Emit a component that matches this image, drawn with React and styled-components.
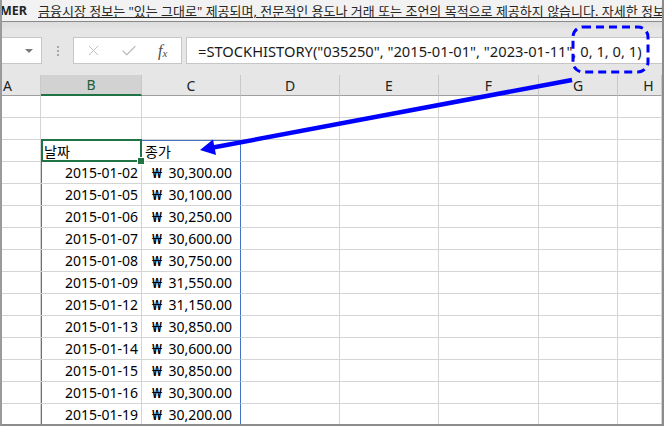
import React from "react";
import styled, { createGlobalStyle } from "styled-components";
import { X, Check } from "lucide-react";

const GlobalStyle = createGlobalStyle`
  html, body {
    margin: 0;
    padding: 0;
    background: #fff;
  }
`;

const COLS = ["A", "B", "C", "D", "E", "F", "G", "H"];

const rows = [
  ["2015-01-02", "30,300.00"],
  ["2015-01-05", "30,100.00"],
  ["2015-01-06", "30,250.00"],
  ["2015-01-07", "30,600.00"],
  ["2015-01-08", "30,750.00"],
  ["2015-01-09", "31,550.00"],
  ["2015-01-12", "31,150.00"],
  ["2015-01-13", "30,850.00"],
  ["2015-01-14", "30,600.00"],
  ["2015-01-15", "30,850.00"],
  ["2015-01-16", "30,300.00"],
  ["2015-01-19", "30,200.00"],
];

const FORMULA = '=STOCKHISTORY("035250", "2015-01-01", "2023-01-11", 0, 1, 0, 1)';

const App = () => {
  // 15 rows: two blank, header, then data
  const sheetRows = [null, null, "head", ...rows];

  return (
    <Window>
      <GlobalStyle />
      <MessageBar>
        <strong>MER</strong>
        <Notice>
          금융시장 정보는 "있는 그대로" 제공되며, 전문적인 용도나 거래 또는 조언의 목적으로
          제공하지 않습니다. 자세한 정보
        </Notice>
      </MessageBar>
      <Shade />

      <FormulaBar>
        <NameBox>
          <Caret />
        </NameBox>
        <Grip>
          <i />
          <i />
          <i />
        </Grip>
        <IconBox>
          <X size={17} strokeWidth={1.4} color="#bdbdbd" />
          <Check size={18} strokeWidth={1.6} color="#bdbdbd" />
          <Fx>
            f<sub>x</sub>
          </Fx>
        </IconBox>
        <FormulaInput>{FORMULA}</FormulaInput>
      </FormulaBar>

      <Sheet>
        {COLS.map((c) => (
          <ColHead key={c} $active={c === "B"} $align={c === "A" ? "start" : c === "H" ? "h" : "center"}>
            {c}
          </ColHead>
        ))}

        {sheetRows.map((r, i) =>
          COLS.map((c) => {
            const inTable = i >= 2;
            const isHead = r === "head";
            let content = null;
            if (c === "B" && isHead) content = <span>날짜</span>;
            if (c === "C" && isHead) content = <span>종가</span>;
            if (Array.isArray(r) && c === "B") content = r[0];
            if (Array.isArray(r) && c === "C")
              content = (
                <>
                  <Won>₩</Won>
                  <span>{r[1]}</span>
                </>
              );
            return (
              <Cell
                key={c + i}
                $align={c === "B" && !isHead ? "right" : "left"}
                $money={c === "C" && !isHead}
                $blueLeft={inTable && c === "B"}
                $blueRight={inTable && c === "C"}
                $blueTop={isHead && (c === "B" || c === "C")}
              >
                {content}
                {isHead && c === "B" && (
                  <Selection>
                    <Handle />
                  </Selection>
                )}
              </Cell>
            );
          })
        )}
      </Sheet>

      <Annotation width="664" height="426" viewBox="0 0 664 426">
        <rect
          x="573"
          y="27"
          width="75"
          height="45"
          rx="10"
          fill="none"
          stroke="#0000ff"
          strokeWidth="3"
          strokeDasharray="8 5"
        />
        <line x1="572" y1="80" x2="213" y2="147.5" stroke="#0000ff" strokeWidth="4.5" />
        <polygon points="200,150 216,155 213,139.5" fill="#0000ff" />
      </Annotation>
    </Window>
  );
};

const Window = styled.div`
  position: relative;
  width: 664px;
  height: 426px;
  box-sizing: border-box;
  overflow: hidden;
  border-left: 2px solid #9a9a9a;
  border-right: 2px solid #8c8c8c;
  border-bottom: 2px solid #8c8c8c;
  background: #e6e6e6;
  font-family: "Noto Sans", "Noto Sans CJK KR", sans-serif;
`;

const MessageBar = styled.div`
  height: 21px;
  display: flex;
  align-items: center;
  gap: 11px;
  background: #f2f2f2;
  border-bottom: 1px solid #8a8a8a;
  white-space: nowrap;
  overflow: hidden;
  font-size: 13px;
  color: #262626;
  margin-left: -2px;

  strong {
    font-weight: 700;
    font-size: 12.5px;
  }
`;

const Notice = styled.span`
  text-decoration: underline;
`;

const Shade = styled.div`
  height: 15px;
  background: linear-gradient(#dcdcdc, #e6e6e6 60%);
`;

const FormulaBar = styled.div`
  height: 27px;
  display: flex;
  align-items: stretch;
  margin-bottom: 11px;
  margin-left: -2px;
`;

const NameBox = styled.div`
  width: 42px;
  box-sizing: border-box;
  background: #fff;
  border: 1px solid #c6c6c6;
  border-left: none;
  display: flex;
  align-items: center;
  justify-content: flex-end;
  padding-right: 8px;
`;

const Caret = styled.span`
  width: 0;
  height: 0;
  border-left: 4px solid transparent;
  border-right: 4px solid transparent;
  border-top: 4px solid #7a7a7a;
`;

const Grip = styled.div`
  width: 31px;
  display: flex;
  flex-direction: column;
  align-items: center;
  justify-content: center;
  gap: 2px;

  i {
    width: 2px;
    height: 2px;
    background: #a6a6a6;
  }
`;

const IconBox = styled.div`
  width: 109px;
  box-sizing: border-box;
  background: #fff;
  border: 1px solid #c6c6c6;
  display: flex;
  align-items: center;
  padding-left: 11px;
  gap: 18px;
`;

const Fx = styled.span`
  font-family: "Liberation Serif", serif;
  font-style: italic;
  font-size: 16px;
  color: #4d4d4d;
  margin-left: 2px;

  sub {
    font-size: 11px;
    vertical-align: -1px;
  }
`;

const FormulaInput = styled.div`
  flex: 1;
  margin-left: 4px;
  background: #fff;
  border: 1px solid #c6c6c6;
  border-right: none;
  display: flex;
  align-items: center;
  padding-left: 11px;
  font-size: 14.7px;
  color: #1a1a1a;
  white-space: nowrap;
  overflow: hidden;
`;

const Sheet = styled.div`
  display: grid;
  grid-template-columns: 39px 101px 99px 99px 99px 100px 79px 1fr;
  grid-auto-rows: 22px;
  grid-template-rows: 21px;
  background: #fff;
`;

const ColHead = styled.div`
  box-sizing: border-box;
  display: flex;
  align-items: center;
  justify-content: ${(p) => (p.$align === "start" ? "flex-start" : "center")};
  padding-left: ${(p) => (p.$align === "start" ? "1px" : p.$align === "h" ? "18px" : "0")};
  background: ${(p) => (p.$active ? "#d2d2d2" : "#e6e6e6")};
  border-right: 1px solid #c8c8c8;
  border-bottom: ${(p) => (p.$active ? "2px solid #217346" : "1px solid #9e9e9e")};
  color: ${(p) => (p.$active ? "#1e5d3a" : "#222")};
  font-size: 14px;
`;

const Cell = styled.div`
  position: relative;
  box-sizing: border-box;
  border-right: 1px solid ${(p) => (p.$blueRight ? "#4472c4" : "#d4d4d4")};
  border-bottom: 1px solid #d4d4d4;
  display: flex;
  align-items: center;
  justify-content: ${(p) =>
    p.$money ? "space-between" : p.$align === "right" ? "flex-end" : "flex-start"};
  padding: ${(p) => (p.$money ? "0 8px 0 10px" : "0 3px")};
  font-size: 14px;
  color: #000;
  white-space: nowrap;
  box-shadow: ${(p) =>
    [p.$blueLeft && "inset 1px 0 0 #4472c4", p.$blueTop && "inset 0 1px 0 #4472c4"]
      .filter(Boolean)
      .join(", ") || "none"};
`;

const Won = styled.span`
  font-size: 14px;
  font-weight: 600;
`;

const Selection = styled.div`
  position: absolute;
  top: -1px;
  left: 0;
  right: -1px;
  bottom: -1px;
  border: 2px solid #217346;
  z-index: 2;
`;

const Handle = styled.span`
  position: absolute;
  right: -5px;
  bottom: -5px;
  width: 6px;
  height: 6px;
  background: #217346;
  border: 1px solid #fff;
`;

const Annotation = styled.svg`
  position: absolute;
  left: -2px;
  top: 0;
  pointer-events: none;
  z-index: 5;
`;

export default App;
